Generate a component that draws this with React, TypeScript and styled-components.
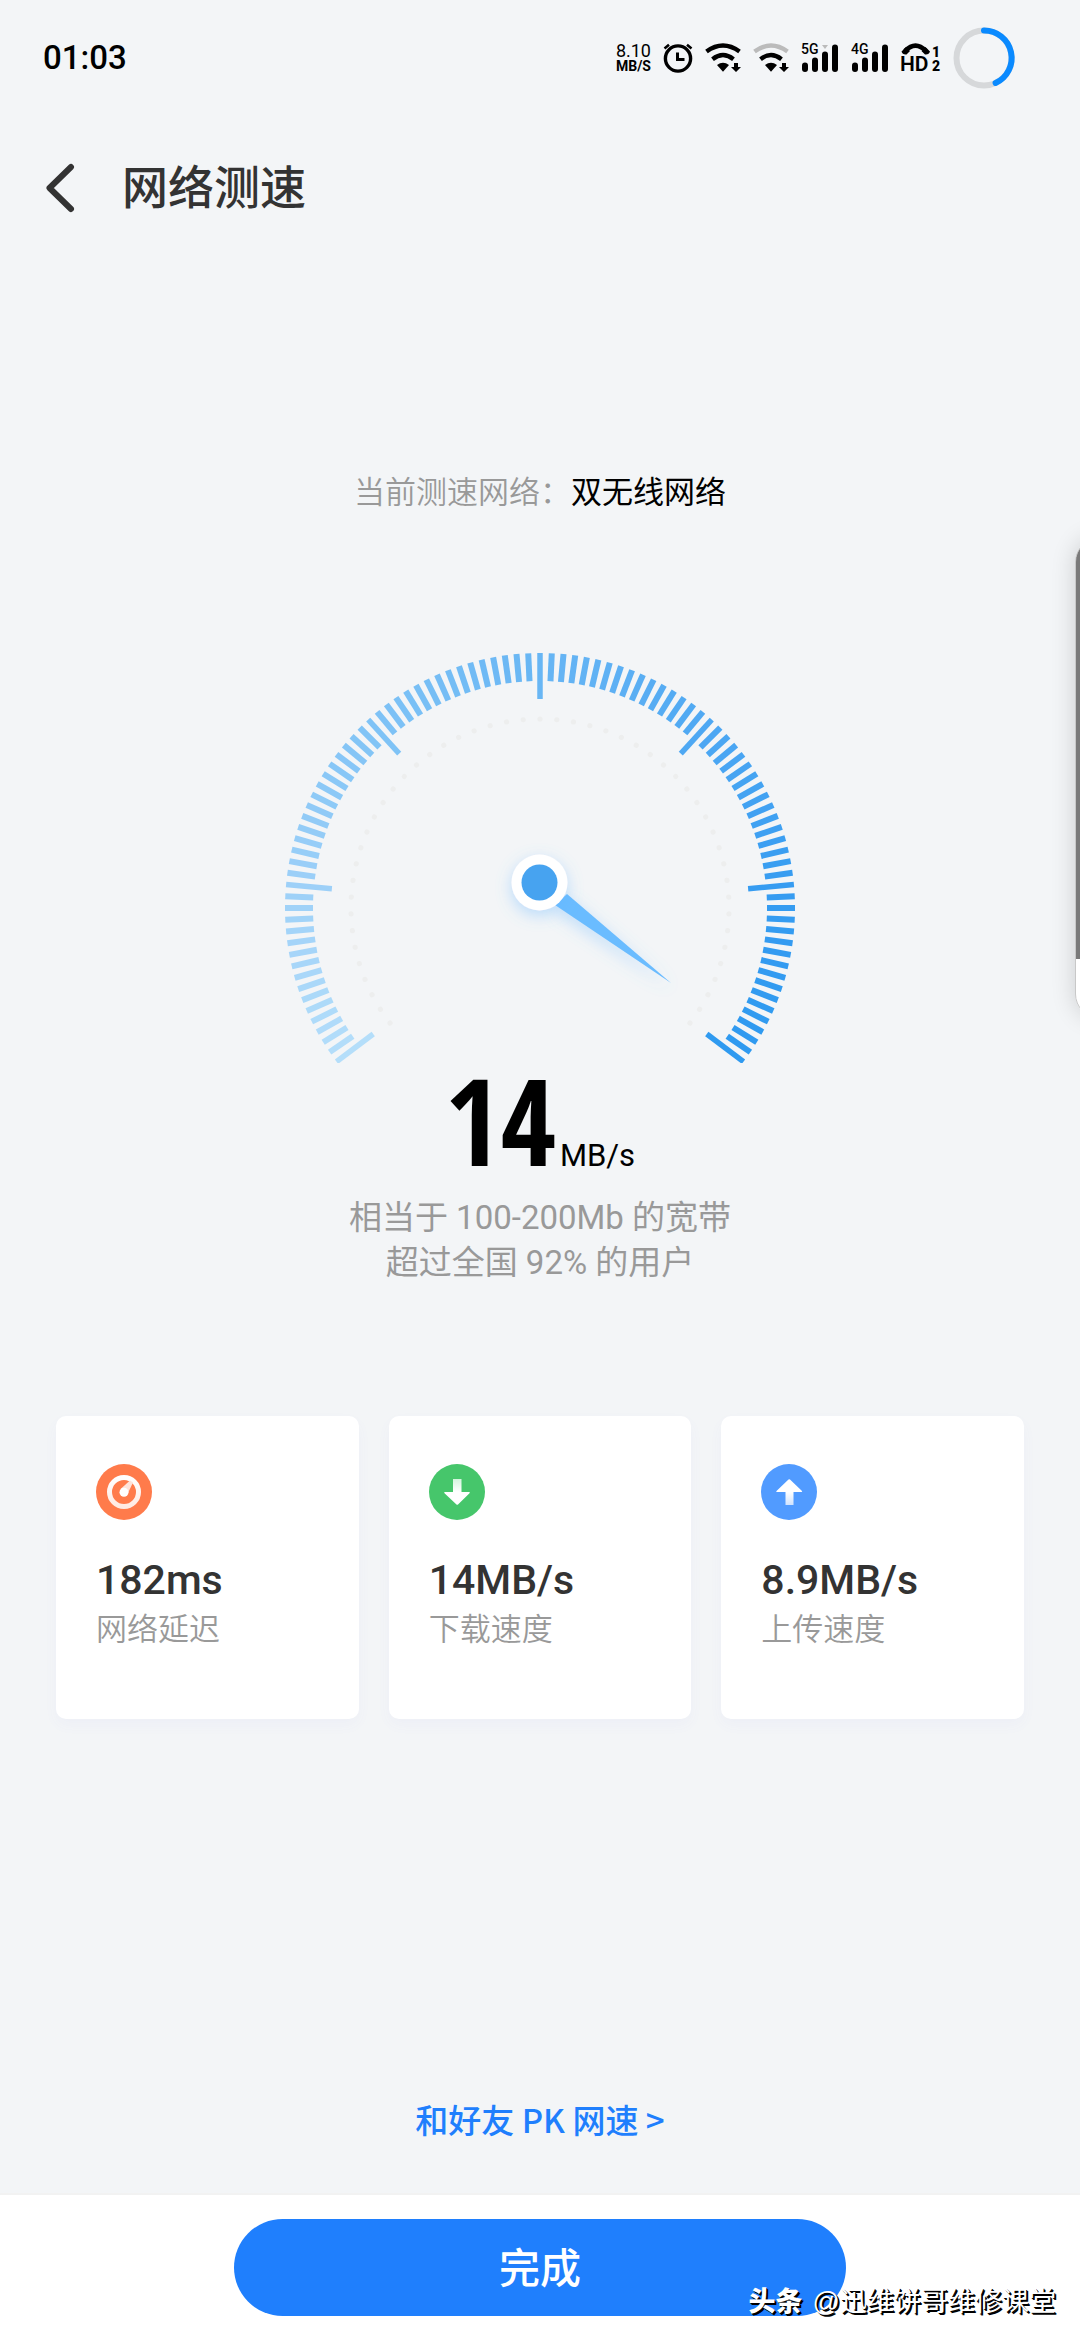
import React from "react";
import styled, { createGlobalStyle } from "styled-components";

const latinFirst = `Roboto, "Noto Sans CJK SC", sans-serif`;
const cjkFirst = `"Noto Sans CJK SC", Roboto, sans-serif`;

const GlobalStyle = createGlobalStyle`
  *, *::before, *::after { box-sizing: border-box; }
  body { margin: 0; background: #f3f5f7; }
  h1, p, dl, dt, dd { margin: 0; font-weight: 400; }
`;

const Screen = styled.div`
  position: relative;
  display: flex;
  flex-direction: column;
  min-height: 100vh;
  overflow: hidden;
  background: #f3f5f7;
  color: #333;
  font-family: ${cjkFirst};
`;

const StatusBar = styled.div`
  display: flex;
  align-items: center;
  justify-content: space-between;
  height: 115px;
  padding: 0 65px 0 43px;
  color: #000;
  font-family: ${latinFirst};
`;

const Clock = styled.time`
  font-size: 33px;
  line-height: 40px;
  font-weight: 500;
`;

const StatusIcons = styled.div`
  display: flex;
  align-items: center;
  gap: 12px;

  svg { display: block; flex: none; overflow: visible; }
`;

const NetSpeed = styled.div`
  display: flex;
  flex-direction: column;
  align-items: flex-end;
  width: 36px;
  font-size: 18px;
  line-height: 16px;
  white-space: nowrap;
`;

const NetUnit = styled.span`
  font-size: 14px;
  line-height: 14px;
  font-weight: 700;
`;

const Header = styled.header`
  display: flex;
  align-items: center;
  gap: 40px;
  height: 146px;
  padding: 0 40px;
`;

const BackButton = styled.button`
  display: flex;
  padding: 0;
  border: 0;
  background: none;
  color: #333;
  cursor: pointer;
`;

const Title = styled.h1`
  padding-bottom: 8px;
  font-size: 46px;
  line-height: 60px;
  font-weight: 450;
`;

const Main = styled.main`
  display: flex;
  flex: 1;
  flex-direction: column;
  align-items: center;
  padding: 206px 56px 48px;
`;

const Network = styled.p`
  color: #999;
  font-size: 31px;
  line-height: 46px;
  font-weight: 350;
`;

const NetworkName = styled.span`
  color: #000;
  font-weight: 400;
`;

const Dial = styled.svg`
  display: block;
  width: 510px;
  height: 410px;
  margin-top: 140px;
`;

const Result = styled.p`
  display: flex;
  align-items: baseline;
  gap: 4px;
  margin-top: 2px;
  color: #000;
  font-family: ${latinFirst};
`;

const ResultNumber = styled.strong`
  font-family: "Noto Sans ExtraCondensed", "Open Sans Condensed", "Roboto Condensed", Roboto, sans-serif;
  font-size: 120px;
  line-height: 110px;
  font-weight: 700;
`;

const ResultUnit = styled.span`
  font-size: 31px;
`;

const Summary = styled.p`
  margin-top: 20px;
  color: #999;
  font-family: ${latinFirst};
  font-size: 33px;
  line-height: 45px;
  text-align: center;
`;

const Stats = styled.dl`
  display: grid;
  grid-template-columns: repeat(3, 1fr);
  gap: 30px;
  width: 100%;
  margin-top: 131px;
`;

const StatCard = styled.div`
  display: flex;
  flex-direction: column;
  aspect-ratio: 1;
  padding: 48px 40px;
  border-radius: 10px;
  background: #fff;
  box-shadow: 0 6px 14px rgba(90, 110, 220, 0.04);

  svg { display: block; }
`;

const StatValue = styled.dd`
  order: 1;
  margin-top: 36px;
  font-family: ${latinFirst};
  font-size: 41px;
  line-height: 48px;
  font-weight: 500;
`;

const StatLabel = styled.dt`
  order: 2;
  color: #999;
  font-size: 31px;
  line-height: 46px;
  font-weight: 350;
`;

const PkLink = styled.a`
  margin-top: auto;
  color: #1f7ffd;
  font-size: 33px;
  line-height: 52px;
  font-weight: 450;
  text-decoration: none;
`;

const Footer = styled.footer`
  display: flex;
  justify-content: center;
  padding: 24px 56px;
  border-top: 2px solid #f2f2f2;
  background: #fff;
`;

const DoneButton = styled.button`
  width: 612px;
  max-width: 100%;
  height: 97px;
  padding: 0 0 6px;
  border: 0;
  border-radius: 49px;
  background: #1f7ffd;
  color: #fff;
  font-family: inherit;
  font-size: 41px;
  font-weight: 500;
  cursor: pointer;
`;

const FloatingWindow = styled.aside`
  position: absolute;
  top: 538px;
  right: -295px;
  width: 300px;
  height: 480px;
  border: 1px solid #c8c8c8;
  border-radius: 24px;
  background: linear-gradient(#7a7a7a 420px, #fff 420px);
  box-shadow: 0 0 24px rgba(0, 0, 0, 0.16);
`;

const Watermark = styled.div`
  position: absolute;
  right: 24px;
  bottom: 18px;
  display: flex;
  align-items: center;
  gap: 10px;
  color: #fff;
  font-family: "Liberation Sans", "Noto Sans CJK SC", sans-serif;
  font-size: 27px;
  line-height: 40px;
  text-shadow: 1px 1px 0 #000, 2px 2px 0 #000;
`;

const WatermarkBrand = styled.b`
  font-weight: 900;
`;

const AlarmIcon = () => (
  <svg width="30" height="30" viewBox="0 0 30 30" fill="none" stroke="#000" aria-hidden="true">
    <circle cx="15" cy="15.5" r="12.6" strokeWidth="3.4" />
    <path d="M14.5 9.5v7h7" strokeWidth="3" />
    <path d="M1.5 5.5 6 1.8M28.500 5.500 24 1.8" strokeWidth="2.6" />
  </svg>
);

const WifiIcon = ({ outer }: { outer: string }) => (
  <svg width="36" height="30" viewBox="0 0 36 30" fill="none" aria-hidden="true">
    <path d="M1.500 8.500Q18-3.500 34.500 8.500" stroke={outer} strokeWidth="4.4" />
    <path d="M7.500 16.200Q18 8 28.500 16.200" stroke="#000" strokeWidth="4.4" />
    <path d="M12 22q6-4.500 12 0l-6 6.800z" fill="#000" />
    <path d="M29 20h4v4h3l-5 5-5-5h3z" fill="#000" />
  </svg>
);

const SignalIcon = ({ label, notch }: { label: string; notch?: boolean }) => (
  <svg width="38" height="30" viewBox="0 0 38 30" role="img" aria-label={label}>
    <text x="0" y="11" fontFamily="Roboto, sans-serif" fontSize="14" fontWeight="500">{label}</text>
    <rect x="1" y="19.500" width="6" height="9.500" rx="3" />
    <rect x="11" y="14.500" width="6" height="14.500" rx="3" />
    <rect x="21" y="8.500" width="6" height="20.500" rx="3" />
    <rect x="31" y="1.500" width="6" height="27.500" rx="3" />
    {notch && <path d="M21 2h6l-3 4z" fill="#bbb" />}
  </svg>
);

const HdIcon = () => (
  <svg width="40" height="30" viewBox="0 0 40 30" role="img" aria-label="HD">
    <path d="M4 8Q14.500-2.500 25 8" fill="none" stroke="#000" strokeWidth="4.600" />
    <path d="M0.500 8.500 5 4l4 4-3.500 3.500q-4 .5-5-3zM29 8.500 24.500 4l-4 4 3.500 3.500q4 .5 5-3z" />
    <text x="-1" y="28" fontFamily="Roboto, sans-serif" fontSize="21" fontWeight="600">HD</text>
    <text x="31" y="14" fontFamily="Roboto, sans-serif" fontSize="14" fontWeight="900">1</text>
    <text x="31" y="28" fontFamily="Roboto, sans-serif" fontSize="14" fontWeight="900">2</text>
  </svg>
);

const RingIcon = () => (
  <svg width="62" height="62" viewBox="0 0 62 62" fill="none" strokeWidth="6" aria-hidden="true">
    <circle cx="31" cy="31" r="27.5" stroke="#d6d8da" />
    <path d="M31 3.500A27.500 27.500 0 0 1 42.600 56" stroke="#0a8aff" strokeLinecap="round" />
  </svg>
);

const BackIcon = () => (
  <svg width="42" height="50" viewBox="0 0 42 50" fill="none" aria-hidden="true">
    <path d="M31 4 9.500 25 31 46" stroke="currentColor" strokeWidth="6" strokeLinecap="round" strokeLinejoin="round" />
  </svg>
);

const LatencyIcon = () => (
  <svg width="56" height="56" viewBox="0 0 56 56" aria-hidden="true">
    <defs>
      <linearGradient id="latency-fade" x1="0" y1="0" x2="0" y2="1">
        <stop offset="0" stopColor="#fff" />
        <stop offset="1" stopColor="#ffeae2" />
      </linearGradient>
    </defs>
    <circle cx="28" cy="28" r="28" fill="#ff7b4b" />
    <circle cx="28" cy="28" r="14.500" fill="none" stroke="url(#latency-fade)" strokeWidth="5" />
    <path d="M24.500 25 34 16.500 37 18.500 32 29z" fill="#ffe3d9" />
    <circle cx="28" cy="28.300" r="4.500" fill="#fff" />
  </svg>
);

const ArrowIcon = ({ id, color, tail, up }: { id: string; color: string; tail: string; up?: boolean }) => (
  <svg width="56" height="56" viewBox="0 0 56 56" aria-hidden="true">
    <defs>
      <linearGradient id={id} x1="0" y1="0" x2="0" y2="1">
        <stop offset="0" stopColor={up ? "#fff" : tail} />
        <stop offset="0.5" stopColor="#fff" />
        <stop offset="1" stopColor={up ? tail : "#fff"} />
      </linearGradient>
    </defs>
    <circle cx="28" cy="28" r="28" fill={color} />
    <path
      d={
        up
          ? "M29 15.500 41 27q.5 1-.5 1H32.500v13h-8V28H16q-1.500 0-.5-1L27.500 15.500q.7-.6 1.500 0z"
          : "M24 15h8.500v13H40q1.500 0 .5 1.200L29 40.500q-.8.700-1.500 0L15.500 29.200Q14.500 28 16 28h8z"
      }
      fill={`url(#${id})`}
    />
  </svg>
);

const TICK_STEP = 360 / 136;
const TICK_SIDE = 48;
const DOT_STEP = 5.1;
const DOT_SIDE = 25;

const TICK_COLORS: [number, number, number][] = [
  [180, 222, 250],
  [157, 208, 248],
  [127, 195, 246],
  [104, 182, 244],
  [78, 168, 243],
  [54, 156, 241],
  [47, 154, 240],
];

const range = (side: number) => Array.from({ length: side * 2 + 1 }, (_, i) => i - side);

const tickColor = (i: number) => {
  const pos = ((i + TICK_SIDE) / (TICK_SIDE * 2)) * (TICK_COLORS.length - 1);
  const from = Math.min(Math.floor(pos), TICK_COLORS.length - 2);
  const mixed = TICK_COLORS[from].map((c, k) => Math.round(c + (TICK_COLORS[from + 1][k] - c) * (pos - from)));
  return `rgb(${mixed.join(",")})`;
};

const Gauge = () => (
  <Dial viewBox="0 0 510 410" role="img" aria-label="14 MB/s">
    <defs>
      <filter id="glow" x="-50%" y="-50%" width="200%" height="200%">
        <feDropShadow dx="0" dy="5" stdDeviation="8" floodColor="#5fb4ff" floodOpacity="0.4" />
      </filter>
    </defs>
    {range(TICK_SIDE).map((i) => (
      <line
        key={i}
        x1="255"
        x2="255"
        y1="0"
        y2={i % 16 === 0 ? 46 : 28}
        stroke={tickColor(i)}
        strokeWidth={i % 16 === 0 ? 5.5 : 6}
        transform={`rotate(${i * TICK_STEP} 255 255)`}
      />
    ))}
    {range(DOT_SIDE).map((i) => (
      <circle key={i} cx="255" cy="66" r="2.600" fill="#edeeee" transform={`rotate(${i * DOT_STEP} 255 255)`} />
    ))}
    <path d="M282 241 386 330 270 252z" fill="#6bbcff" filter="url(#glow)" />
    <circle cx="254.500" cy="229.500" r="28" fill="#fff" filter="url(#glow)" />
    <circle cx="254.500" cy="229.500" r="18" fill="#47a3f0" />
  </Dial>
);

const stats = [
  { value: "182ms", label: "网络延迟", icon: <LatencyIcon /> },
  { value: "14MB/s", label: "下载速度", icon: <ArrowIcon id="down-fade" color="#46c66b" tail="#d3f5dd" /> },
  { value: "8.9MB/s", label: "上传速度", icon: <ArrowIcon id="up-fade" color="#519bff" tail="#cfe3ff" up /> },
];

export default function App() {
  return (
    <Screen>
      <GlobalStyle />
      <StatusBar>
        <Clock>01:03</Clock>
        <StatusIcons>
          <NetSpeed>
            <span>8.10</span>
            <NetUnit>MB/S</NetUnit>
          </NetSpeed>
          <AlarmIcon />
          <WifiIcon outer="#000" />
          <WifiIcon outer="#bbb" />
          <SignalIcon label="5G" notch />
          <SignalIcon label="4G" />
          <HdIcon />
          <RingIcon />
        </StatusIcons>
      </StatusBar>
      <Header>
        <BackButton type="button" aria-label="返回">
          <BackIcon />
        </BackButton>
        <Title>网络测速</Title>
      </Header>
      <Main>
        <Network>
          当前测速网络：<NetworkName>双无线网络</NetworkName>
        </Network>
        <Gauge />
        <Result>
          <ResultNumber>14</ResultNumber>
          <ResultUnit>MB/s</ResultUnit>
        </Result>
        <Summary>
          相当于 100-200Mb 的宽带
          <br />
          超过全国 92% 的用户
        </Summary>
        <Stats>
          {stats.map((s) => (
            <StatCard key={s.label}>
              {s.icon}
              <StatLabel>{s.label}</StatLabel>
              <StatValue>{s.value}</StatValue>
            </StatCard>
          ))}
        </Stats>
        <PkLink href="#pk">和好友 PK 网速 &gt;</PkLink>
      </Main>
      <Footer>
        <DoneButton type="button">完成</DoneButton>
      </Footer>
      <FloatingWindow aria-hidden="true" />
      <Watermark>
        <WatermarkBrand>头条</WatermarkBrand>
        <span>@迅维饼哥维修课堂</span>
      </Watermark>
    </Screen>
  );
}
